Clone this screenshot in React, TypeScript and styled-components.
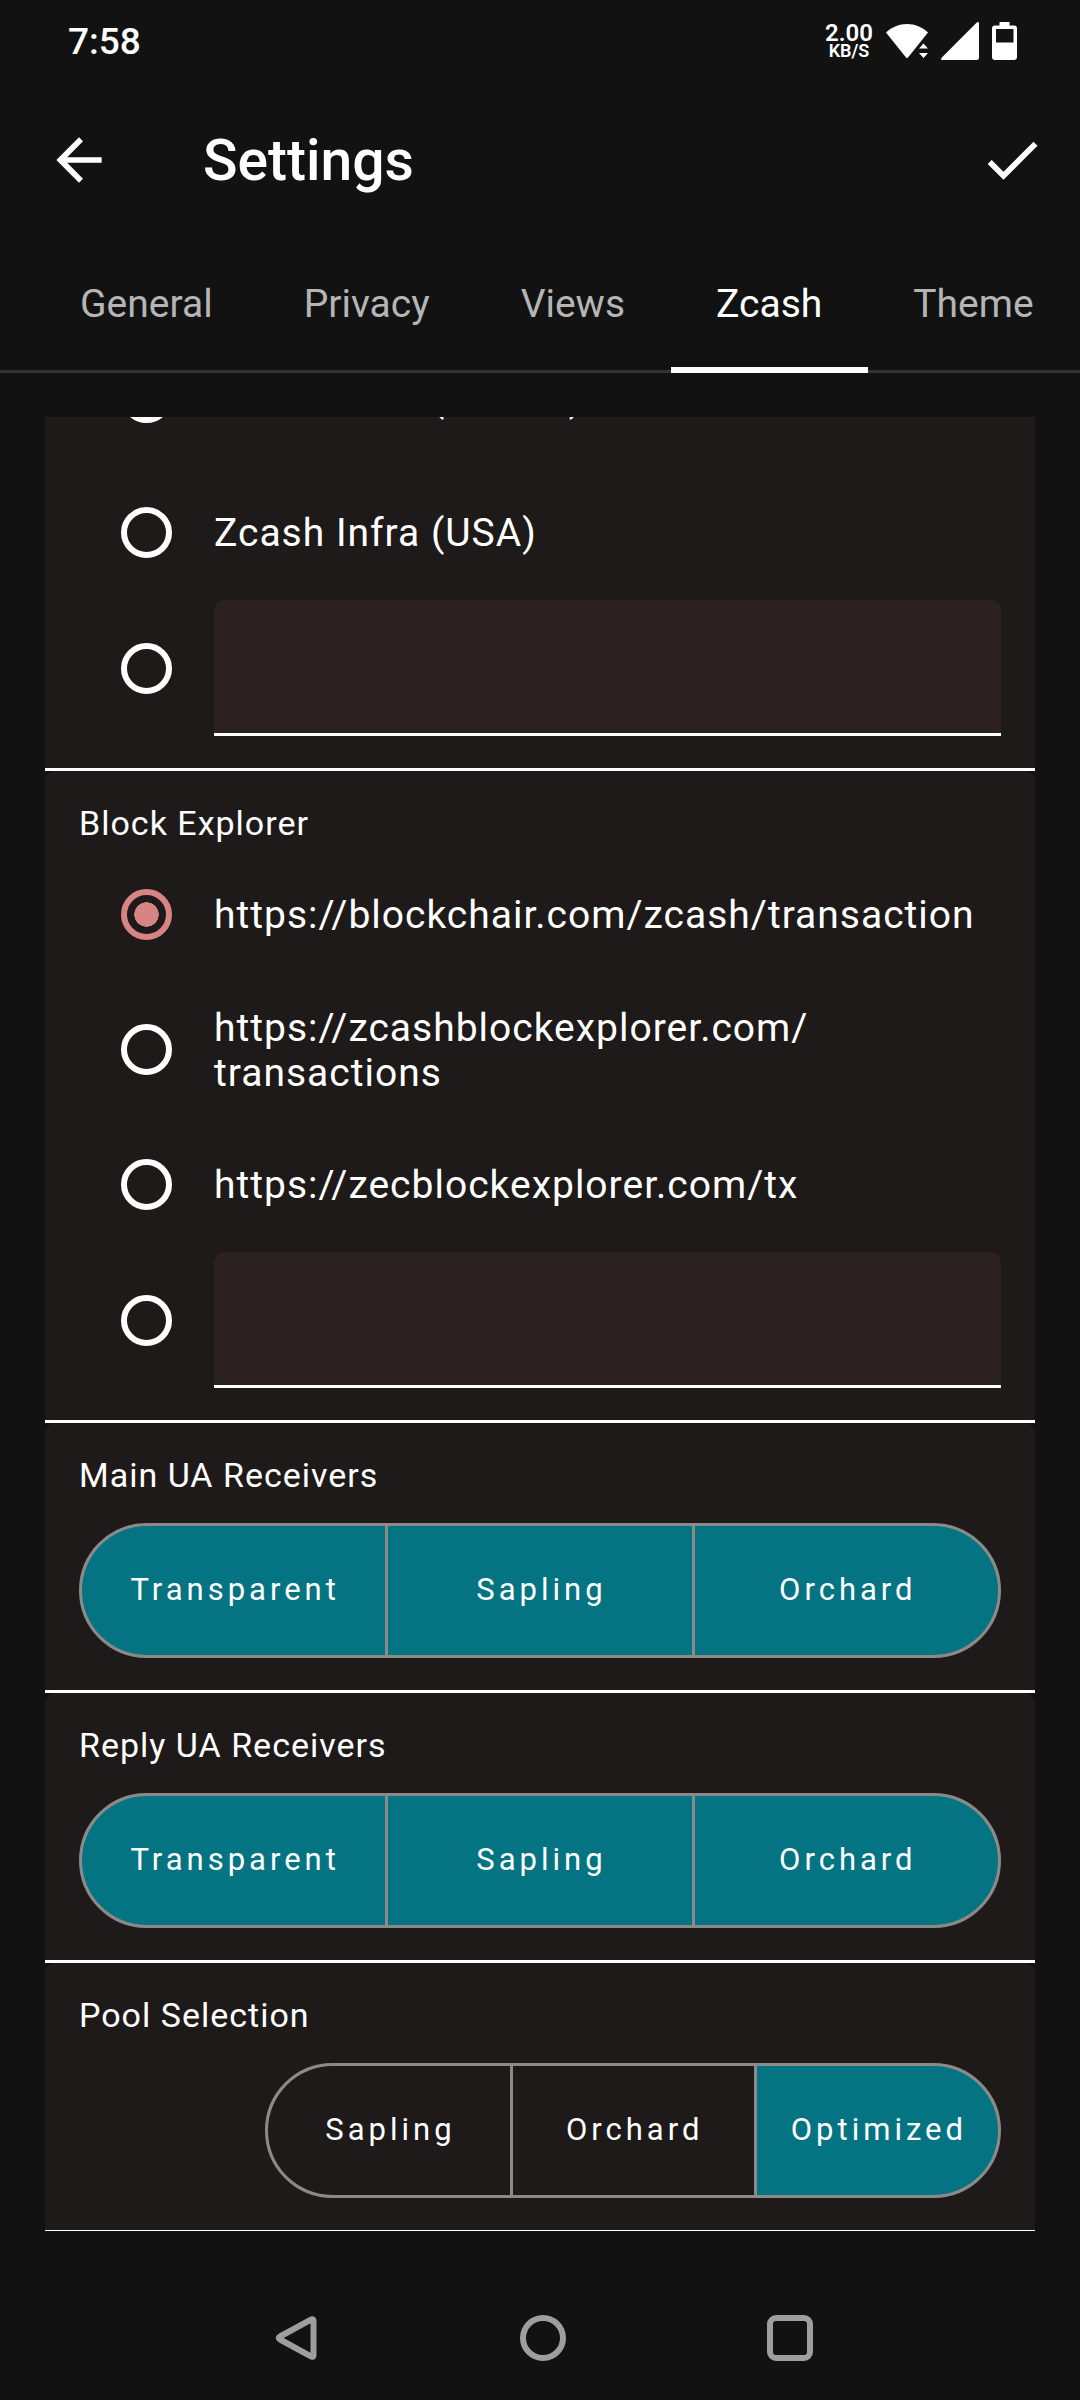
import { Fragment, useId, useLayoutEffect, useRef, useState } from "react";
import styled, { createGlobalStyle } from "styled-components";

const GlobalStyle = createGlobalStyle`
  *, *::before, *::after { box-sizing: border-box; }
  body {
    margin: 0;
    background: #121212;
    color: #ffffff;
    font-family: Roboto, "Noto Sans", sans-serif;
  }
  button, input { font: inherit; color: inherit; }
  button { margin: 0; padding: 0; border: 0; background: none; cursor: pointer; }
`;

const Screen = styled.div`
  display: flex;
  flex-direction: column;
  height: 100vh;
  overflow: hidden;
`;

const StatusBar = styled.div`
  flex: none;
  display: flex;
  align-items: center;
  justify-content: space-between;
  height: 81px;
  padding: 0 63px 0 68px;
`;

const Clock = styled.time`
  padding-top: 2px;
  font-size: 37px;
  line-height: 45px;
  font-weight: 500;
`;

const StatusIcons = styled.div`
  display: flex;
  align-items: center;
  gap: 13px;

  svg { display: block; fill: #ffffff; }
`;

const NetSpeed = styled.div`
  display: flex;
  flex-direction: column;
  align-items: center;
  font-weight: 600;
`;

const Rate = styled.span`
  font-size: 24px;
  line-height: 20px;
`;

const Unit = styled.span`
  font-size: 18px;
  line-height: 16px;
`;

const AppBar = styled.header`
  flex: none;
  display: flex;
  align-items: center;
  height: 157px;
  padding: 0 34px 0 45px;
`;

const IconButton = styled.button`
  flex: none;
  width: 68px;
  height: 68px;

  svg { display: block; width: 68px; height: 68px; fill: #ffffff; }
`;

const Title = styled.h1`
  flex: 1;
  margin: 0;
  padding: 2px 0 0 90px;
  font-size: 57px;
  line-height: 68px;
  font-weight: 500;
`;

const TabList = styled.div`
  flex: none;
  display: flex;
  height: 135px;
  padding-left: 35px;
  overflow: hidden;
  box-shadow: inset 0 -3px #333333;
`;

const Tab = styled.button<{ $active: boolean }>`
  flex: none;
  padding: 0 46px 3px 45px;
  font-size: 39px;
  line-height: 45px;
  color: ${(p) => (p.$active ? "#ffffff" : "#b5b5b5")};
  box-shadow: ${(p) => (p.$active ? "inset 0 -6px #ffffff" : "none")};
`;

const ScrollArea = styled.main`
  flex: 1;
  min-height: 0;
  margin: 44px 45px 45px;
  overflow-y: auto;
  scrollbar-width: none;
`;

const Section = styled.fieldset`
  display: flex;
  flex-direction: column;
  min-width: 0;
  margin: 0;
  padding: 0 34px 32px;
  border: 0;
  border-radius: 11px 11px 0 0;
  background: #1e1a19;
`;

const Divider = styled.hr<{ $last?: boolean }>`
  height: ${(p) => (p.$last ? 1 : 3)}px;
  margin: 0;
  border: 0;
  background: #ffffff;
`;

const SectionTitle = styled.h2`
  margin: 0;
  padding-top: 32px;
  font-size: 34px;
  line-height: 40px;
  font-weight: 400;
  letter-spacing: 1px;
`;

const Options = styled.div`
  display: flex;
  flex-direction: column;
  padding: 4px 0 0 42px;
`;

const OptionRow = styled.div`
  display: flex;
  align-items: center;
  gap: 42px;
  min-height: 135px;
`;

const Radio = styled.input`
  flex: none;
  appearance: none;
  width: 51px;
  height: 51px;
  margin: 0;
  padding: 7px;
  border: 6px solid #ffffff;
  border-radius: 50%;
  cursor: pointer;

  &:checked {
    border-color: #d78484;
    background: radial-gradient(circle closest-side, #d78484 96%, transparent) content-box;
  }
`;

const OptionLabel = styled.label`
  flex: 1;
  min-width: 0;
  padding-top: 2px;
  font-size: 39px;
  line-height: 45px;
  letter-spacing: 1px;
  cursor: pointer;
`;

const UrlInput = styled.input`
  flex: 1;
  min-width: 0;
  height: 136px;
  padding: 0 34px;
  border: 0;
  border-bottom: 3px solid #ffffff;
  border-radius: 11px 11px 0 0;
  outline: 0;
  background: #2a2120;
  font-size: 39px;
`;

const Segments = styled.div<{ $compact?: boolean }>`
  display: grid;
  grid-auto-flow: column;
  grid-auto-columns: 1fr;
  gap: 3px;
  align-self: ${(p) => (p.$compact ? "flex-end" : "stretch")};
  height: 135px;
  margin-top: 28px;
  border: 3px solid #8c8a89;
  border-radius: 68px;
  background: #8c8a89;
  overflow: hidden;
`;

const Segment = styled.button<{ $on: boolean }>`
  padding: 0 31px 2px 34px;
  font-size: 31px;
  line-height: 36px;
  letter-spacing: 4px;
  background: ${(p) => (p.$on ? "#047482" : "#1e1a19")};
`;

const NavBar = styled.nav`
  flex: none;
  display: flex;
  align-items: center;
  justify-content: center;
  gap: 179px;
  height: 124px;
  padding-left: 6px;

  svg { fill: none; stroke: #9e9e9e; stroke-width: 6; stroke-linejoin: round; }
`;

type Option = { id: string; label?: string };

// Long addresses may break after a path slash, never inside "://".
function BreakablePath({ text }: { text: string }) {
  const parts = text.split(/(?<=[^:/]\/)(?!\/)/);
  return (
    <>
      {parts.map((part, i) => (
        <Fragment key={i}>
          {i > 0 && <wbr />}
          {part}
        </Fragment>
      ))}
    </>
  );
}

function RadioOptions({ name, options, initial }: { name: string; options: Option[]; initial?: string }) {
  const base = useId();
  const [value, setValue] = useState(initial);
  return (
    <Options role="radiogroup" aria-label={name}>
      {options.map((o) => {
        const id = base + o.id;
        return (
          <OptionRow key={o.id}>
            <Radio
              type="radio"
              id={id}
              name={base}
              checked={value === o.id}
              onChange={() => setValue(o.id)}
              aria-label={o.label ?? `Custom ${name}`}
            />
            {o.label ? (
              <OptionLabel htmlFor={id}>
                <BreakablePath text={o.label} />
              </OptionLabel>
            ) : (
              <UrlInput type="text" aria-label={`Custom ${name} URL`} onFocus={() => setValue(o.id)} />
            )}
          </OptionRow>
        );
      })}
    </Options>
  );
}

type SegmentsProps = { name: string; items: string[]; initial: string[]; single?: boolean };

function SegmentedControl({ name, items, initial, single }: SegmentsProps) {
  const [on, setOn] = useState(initial);
  const toggle = (item: string) =>
    setOn(single ? [item] : on.includes(item) ? on.filter((i) => i !== item) : [...on, item]);
  return (
    <Segments role="group" aria-label={name} $compact={single}>
      {items.map((item) => (
        <Segment
          key={item}
          type="button"
          aria-pressed={on.includes(item)}
          $on={on.includes(item)}
          onClick={() => toggle(item)}
        >
          {item}
        </Segment>
      ))}
    </Segments>
  );
}

const TABS = ["General", "Privacy", "Views", "Zcash", "Theme"];

const SERVERS: Option[] = [
  { id: "fr", label: "Zcash Infra (France)" },
  { id: "us", label: "Zcash Infra (USA)" },
  { id: "custom" },
];

const EXPLORERS: Option[] = [
  { id: "blockchair", label: "https://blockchair.com/zcash/transaction" },
  { id: "zcashblock", label: "https://zcashblockexplorer.com/transactions" },
  { id: "zecblock", label: "https://zecblockexplorer.com/tx" },
  { id: "custom" },
];

const RECEIVERS = ["Transparent", "Sapling", "Orchard"];
const POOLS = ["Sapling", "Orchard", "Optimized"];

export default function App() {
  const [tab, setTab] = useState("Zcash");
  const scroller = useRef<HTMLElement>(null);

  useLayoutEffect(() => {
    const el = scroller.current;
    if (el) el.scrollTop = el.scrollHeight;
  }, []);

  return (
    <Screen>
      <GlobalStyle />
      <StatusBar>
        <Clock>7:58</Clock>
        <StatusIcons>
          <NetSpeed>
            <Rate>2.00</Rate>
            <Unit>KB/S</Unit>
          </NetSpeed>
          <svg width="42" height="38" viewBox="0 0 42 38" aria-hidden="true">
            <path d="M0 10.500C6 5 13 2 21 2s15 3 21 8.500L22 35.500q-1 1-2 0Z" />
            <path d="M33 26.500 37.500 21.500 42 26.500ZM33 31H42L37.500 36Z" />
          </svg>
          <svg width="38" height="38" viewBox="0 0 38 38" aria-hidden="true">
            <path d="M35.500.8Q38-1 38 1.500V35.500Q38 38 35.500 38H1.500Q-1 38 .8 35.500Z" />
          </svg>
          <svg width="25" height="38" viewBox="0 0 25 38" aria-hidden="true">
            <path
              fillRule="evenodd"
              d="M7.500 0h10v3.500H22a3 3 0 0 1 3 3V35a3 3 0 0 1-3 3H3a3 3 0 0 1-3-3V6.500a3 3 0 0 1 3-3h4.500ZM4 7v13.500h17.500V7Z"
            />
          </svg>
        </StatusIcons>
      </StatusBar>

      <AppBar>
        <IconButton type="button" aria-label="Back">
          <svg viewBox="0 0 24 24" aria-hidden="true">
            <path d="M20 11H7.830l5.590-5.590L12 4l-8 8 8 8 1.410-1.410L7.830 13H20v-2z" />
          </svg>
        </IconButton>
        <Title>Settings</Title>
        <IconButton type="button" aria-label="Save">
          <svg viewBox="0 0 24 24" aria-hidden="true">
            <path d="M9 16.170 4.830 12l-1.420 1.410L9 19 21 7l-1.410-1.410z" />
          </svg>
        </IconButton>
      </AppBar>

      <TabList role="tablist">
        {TABS.map((t) => (
          <Tab key={t} type="button" role="tab" aria-selected={t === tab} $active={t === tab} onClick={() => setTab(t)}>
            {t}
          </Tab>
        ))}
      </TabList>

      <ScrollArea ref={scroller}>
        <Section>
          <RadioOptions name="Server" options={SERVERS} />
        </Section>
        <Divider />
        <Section>
          <SectionTitle>Block Explorer</SectionTitle>
          <RadioOptions name="Block Explorer" options={EXPLORERS} initial="blockchair" />
        </Section>
        <Divider />
        <Section>
          <SectionTitle>Main UA Receivers</SectionTitle>
          <SegmentedControl name="Main UA Receivers" items={RECEIVERS} initial={RECEIVERS} />
        </Section>
        <Divider />
        <Section>
          <SectionTitle>Reply UA Receivers</SectionTitle>
          <SegmentedControl name="Reply UA Receivers" items={RECEIVERS} initial={RECEIVERS} />
        </Section>
        <Divider />
        <Section>
          <SectionTitle>Pool Selection</SectionTitle>
          <SegmentedControl name="Pool Selection" items={POOLS} initial={["Optimized"]} single />
        </Section>
        <Divider $last />
      </ScrollArea>

      <NavBar aria-label="System">
        <IconButton type="button" aria-label="System back">
          <svg viewBox="0 0 68 68" aria-hidden="true">
            <path d="M51.500 17Q51.500 14 48.500 15.800L18 32.500Q15.500 34 18 35.500L48.500 52.200Q51.500 54 51.500 51Z" />
          </svg>
        </IconButton>
        <IconButton type="button" aria-label="Home">
          <svg viewBox="0 0 68 68" aria-hidden="true">
            <circle cx="34" cy="34" r="20" />
          </svg>
        </IconButton>
        <IconButton type="button" aria-label="Recent apps">
          <svg viewBox="0 0 68 68" aria-hidden="true">
            <rect x="14" y="14" width="40" height="40" rx="6" />
          </svg>
        </IconButton>
      </NavBar>
    </Screen>
  );
}
